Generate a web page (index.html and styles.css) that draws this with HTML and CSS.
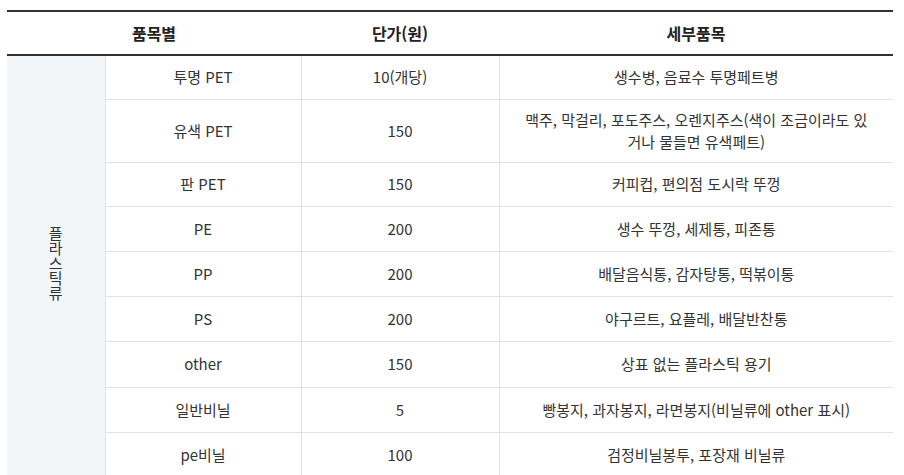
FILE: index.html
```html
<!DOCTYPE html>
<html lang="ko">
<head>
<meta charset="utf-8">
<link rel="stylesheet" href="styles.css">
</head>
<body>
<table class="tbl">
  <colgroup>
    <col class="c1"><col class="c2"><col class="c3"><col class="c4">
  </colgroup>
  <thead>
    <tr><th colspan="2">품목별</th><th>단가(원)</th><th>세부품목</th></tr>
  </thead>
  <tbody>
    <tr class="short">
      <td rowspan="9" class="cat"><span class="vert">플라스틱류</span></td>
      <td>투명 PET</td><td>10(개당)</td><td>생수병, 음료수 투명페트병</td>
    </tr>
    <tr class="tall"><td>유색 PET</td><td>150</td><td>맥주, 막걸리, 포도주스, 오렌지주스(색이 조금이라도 있<br>거나 물들면 유색페트)</td></tr>
    <tr class="short"><td>판 PET</td><td>150</td><td>커피컵, 편의점 도시락 뚜껑</td></tr>
    <tr><td>PE</td><td>200</td><td>생수 뚜껑, 세제통, 피존통</td></tr>
    <tr><td>PP</td><td>200</td><td>배달음식통, 감자탕통, 떡볶이통</td></tr>
    <tr><td>PS</td><td>200</td><td>야구르트, 요플레, 배달반찬통</td></tr>
    <tr class="wide"><td>other</td><td>150</td><td>상표 없는 플라스틱 용기</td></tr>
    <tr><td>일반비닐</td><td>5</td><td>빵봉지, 과자봉지, 라면봉지(비닐류에 other 표시)</td></tr>
    <tr><td>pe비닐</td><td>100</td><td>검정비닐봉투, 포장재 비닐류</td></tr>
  </tbody>
</table>
</body>
</html>
```

FILE: styles.css
```css
html, body {
  margin: 0;
  padding: 0;
  background: #fff;
}
body {
  padding: 10px 11px 0 7px;
  font-family: "Noto Sans CJK KR", "Noto Sans", sans-serif;
  color: #333;
}
.tbl {
  width: 886px;
  border-collapse: collapse;
  table-layout: fixed;
  font-size: 15px;
  border-top: 2px solid #333;
}
.c1 { width: 98px; }
.c2 { width: 196px; }
.c3 { width: 198px; }
.c4 { width: 394px; }
.tbl th {
  height: 42px;
  padding: 0;
  font-size: 16px;
  font-weight: bold;
  color: #222;
  border-bottom: 2px solid #333;
  text-align: center;
  vertical-align: middle;
}
.tbl td {
  height: 45px;
  padding: 0 8px;
  text-align: center;
  vertical-align: middle;
  border-bottom: 1px solid #e2e2e2;
  border-left: 1px solid #e2e2e2;
  line-height: 22px;
  box-sizing: border-box;
}
.tbl tr.short td {
  height: 44px;
}
.tbl tr.wide td {
  height: 46px;
}
.tbl tr.tall td {
  height: 63px;
}
.tbl td.cat {
  background: #f2f6f9;
  border-left: none;
  border-right: 1px solid #e2e2e2;
  padding: 0;
}
.vert {
  writing-mode: vertical-lr;
  text-orientation: upright;
  line-height: 15px;
  display: inline-block;
}
```
